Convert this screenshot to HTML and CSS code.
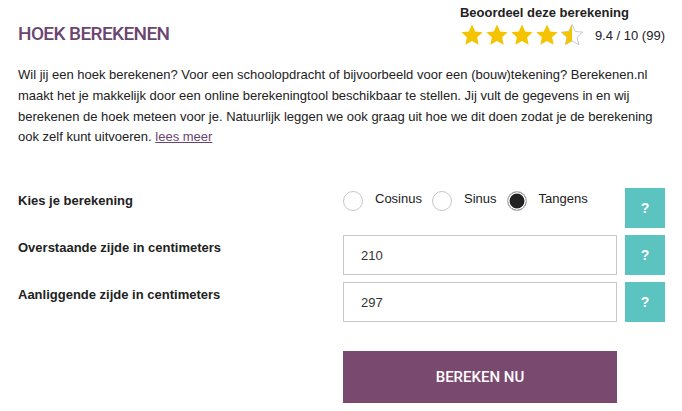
FILE: index.html
```html
<!DOCTYPE html>
<html lang="nl">
<head>
<meta charset="utf-8">
<title>Hoek berekenen</title>
<link rel="stylesheet" href="styles.css">
</head>
<body>
<div class="page">
  <header class="header">
    <h1 class="title">HOEK BEREKENEN</h1>
    <div class="rating">
      <div class="rating-label">Beoordeel deze berekening</div>
      <div class="rating-row">
        <div class="stars">
          <svg class="star" viewBox="0 0 24 23"><path class="star-full" d="M12 0.5l3.2 6.9 7.5.8-5.6 5.1 1.6 7.4L12 16.9l-6.7 3.8 1.6-7.4L1.3 8.2l7.5-.8z"/></svg>
          <svg class="star" viewBox="0 0 24 23"><path class="star-full" d="M12 0.5l3.2 6.9 7.5.8-5.6 5.1 1.6 7.4L12 16.9l-6.7 3.8 1.6-7.4L1.3 8.2l7.5-.8z"/></svg>
          <svg class="star" viewBox="0 0 24 23"><path class="star-full" d="M12 0.5l3.2 6.9 7.5.8-5.6 5.1 1.6 7.4L12 16.9l-6.7 3.8 1.6-7.4L1.3 8.2l7.5-.8z"/></svg>
          <svg class="star" viewBox="0 0 24 23"><path class="star-full" d="M12 0.5l3.2 6.9 7.5.8-5.6 5.1 1.6 7.4L12 16.9l-6.7 3.8 1.6-7.4L1.3 8.2l7.5-.8z"/></svg>
          <svg class="star" viewBox="0 0 24 23">
            <defs><clipPath id="half"><rect x="0" y="0" width="12" height="23"/></clipPath></defs>
            <path class="star-empty" d="M12 0.5l3.2 6.9 7.5.8-5.6 5.1 1.6 7.4L12 16.9l-6.7 3.8 1.6-7.4L1.3 8.2l7.5-.8z"/>
            <path class="star-full" clip-path="url(#half)" d="M12 0.5l3.2 6.9 7.5.8-5.6 5.1 1.6 7.4L12 16.9l-6.7 3.8 1.6-7.4L1.3 8.2l7.5-.8z"/>
          </svg>
        </div>
        <span class="rating-score">9.4 / 10 (99)</span>
      </div>
    </div>
  </header>

  <p class="intro">Wil jij een hoek berekenen? Voor een schoolopdracht of bijvoorbeeld voor een (bouw)tekening? Berekenen.nl maakt het je makkelijk door een online berekeningtool beschikbaar te stellen. Jij vult de gegevens in en wij berekenen de hoek meteen voor je. Natuurlijk leggen we ook graag uit hoe we dit doen zodat je de berekening ook zelf kunt uitvoeren. <a href="#" class="more">lees meer</a></p>

  <form class="calc">
    <div class="label">Kies je berekening</div>
    <div class="radios">
      <label class="radio"><input type="radio" name="fn"><span>Cosinus</span></label>
      <label class="radio"><input type="radio" name="fn"><span>Sinus</span></label>
      <label class="radio"><input type="radio" name="fn" checked><span>Tangens</span></label>
    </div>
    <button type="button" class="help">?</button>

    <div class="label">Overstaande zijde in centimeters</div>
    <input class="field" type="text" value="210">
    <button type="button" class="help">?</button>

    <div class="label">Aanliggende zijde in centimeters</div>
    <input class="field" type="text" value="297">
    <button type="button" class="help">?</button>

    <button type="button" class="submit">BEREKEN NU</button>
  </form>
</div>
</body>
</html>
```

FILE: styles.css
```css
* { box-sizing: border-box; }

body {
  margin: 0;
  background: #fff;
  font-family: "Liberation Sans", Arial, sans-serif;
  font-size: 13px;
  color: #222;
}

.page {
  width: 682px;
  padding: 4px 17px 0 18px;
}

.header {
  display: flex;
  justify-content: space-between;
  align-items: flex-start;
}

.title {
  margin: 18px 0 0;
  font-family: Roboto, "Liberation Sans", sans-serif;
  font-weight: 500;
  font-size: 19px;
  line-height: 24px;
  color: #6b4571;
  letter-spacing: -0.6px;
}

.rating {
  white-space: nowrap;
}

.rating-label {
  font-weight: bold;
  font-size: 13px;
  line-height: 18px;
  color: #222;
}

.rating-row {
  display: flex;
  align-items: center;
  margin-top: 2px;
}

.stars {
  display: flex;
  gap: 1px;
}

.star {
  width: 24px;
  height: 23px;
  display: block;
}

.star-full { fill: #f5c400; }
.star-empty { fill: #fff; stroke: #c8c8c8; stroke-width: 1; }

.rating-score {
  margin-left: 11px;
  font-size: 13px;
  color: #222;
}

.intro {
  margin: 18px 0 0;
  line-height: 20.8px;
  color: #222;
}

.more {
  color: #6b4571;
  text-decoration: underline;
}

.calc {
  display: grid;
  grid-template-columns: 1fr 274px 40px;
  grid-template-rows: 40px 40px 40px auto;
  column-gap: 8px;
  row-gap: 7px;
  margin-top: 40px;
}

.label {
  font-weight: bold;
  line-height: 20px;
  padding-top: 3px;
  color: #222;
}

.radios {
  display: flex;
  align-items: flex-start;
  padding-top: 3px;
  gap: 10px;
}

.radio {
  display: flex;
  align-items: flex-start;
  gap: 12px;
  line-height: 16px;
}

.radio input {
  appearance: none;
  -webkit-appearance: none;
  margin: 0;
  width: 20px;
  height: 20px;
  border: 1px solid #c6c6c6;
  border-radius: 50%;
  background: #fff;
}

.radio input:checked {
  background: #222;
  box-shadow: inset 0 0 0 1.5px #fff;
  border-color: #bdbdbd;
}

.field {
  width: 274px;
  height: 40px;
  border: 1px solid #c8c8c8;
  padding: 0 0 0 17px;
  font-family: "Liberation Sans", Arial, sans-serif;
  font-size: 13px;
  color: #333;
  outline: none;
}

.help {
  width: 40px;
  height: 40px;
  border: 0;
  padding: 0;
  background: #5bc4c0;
  color: #fff;
  font-family: "Liberation Sans", Arial, sans-serif;
  font-weight: bold;
  font-size: 14px;
}

.submit {
  grid-column: 2;
  height: 52px;
  margin-top: 22px;
  border: 0;
  background: #7a4970;
  color: #fff;
  font-family: Roboto, "Liberation Sans", sans-serif;
  font-weight: 500;
  font-size: 15px;
}
```
